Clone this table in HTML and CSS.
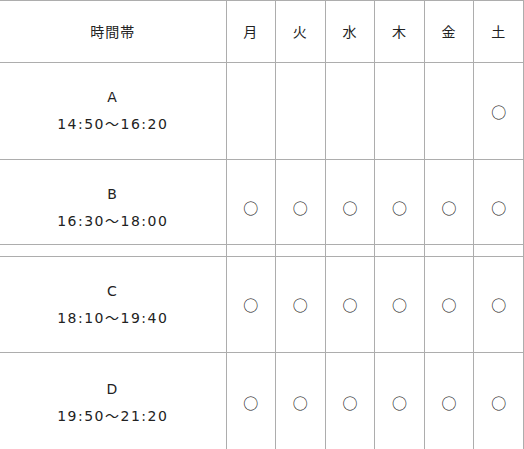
FILE: index.html
```html
<!DOCTYPE html>
<html lang="ja">
<head>
<meta charset="utf-8">
<link rel="stylesheet" href="styles.css">
</head>
<body>
<table class="schedule">
  <colgroup>
    <col class="col-time">
    <col class="col-day"><col class="col-day"><col class="col-day">
    <col class="col-day"><col class="col-day"><col class="col-day">
  </colgroup>
  <thead>
    <tr class="row-head">
      <th>時間帯</th><th>月</th><th>火</th><th>水</th><th>木</th><th>金</th><th>土</th>
    </tr>
  </thead>
  <tbody>
    <tr class="row-a">
      <td class="slot">A<br>14:50～16:20</td><td></td><td></td><td></td><td></td><td></td><td class="mark">○</td>
    </tr>
    <tr class="row-b">
      <td class="slot">B<br>16:30～18:00</td><td class="mark">○</td><td class="mark">○</td><td class="mark">○</td><td class="mark">○</td><td class="mark">○</td><td class="mark">○</td>
    </tr>
    <tr class="row-gap">
      <td></td><td></td><td></td><td></td><td></td><td></td><td></td>
    </tr>
    <tr class="row-c">
      <td class="slot">C<br>18:10～19:40</td><td class="mark">○</td><td class="mark">○</td><td class="mark">○</td><td class="mark">○</td><td class="mark">○</td><td class="mark">○</td>
    </tr>
    <tr class="row-d">
      <td class="slot">D<br>19:50～21:20</td><td class="mark">○</td><td class="mark">○</td><td class="mark">○</td><td class="mark">○</td><td class="mark">○</td><td class="mark">○</td>
    </tr>
  </tbody>
</table>
</body>
</html>
```
FILE: styles.css
```css
html, body {
  margin: 0;
  padding: 0;
  background: #ffffff;
}
body {
  font-family: "Noto Sans CJK JP", "DejaVu Sans", sans-serif;
  color: #222222;
  font-size: 14px;
  overflow: hidden;
}
.schedule {
  border-collapse: collapse;
  table-layout: fixed;
  width: 524px;
}
.col-time { width: 226px; }
.schedule th,
.schedule td {
  border: 1px solid #adadad;
  text-align: center;
  vertical-align: middle;
  padding: 0;
  font-weight: normal;
  letter-spacing: 1px;
  line-height: 27px;
}
.schedule .slot {
  font-family: "DejaVu Sans", "Noto Sans CJK JP", sans-serif;
  letter-spacing: 1.5px;
}
.schedule tr > :first-child {
  border-left: none;
}
.row-head { height: 62px; }
.row-a { height: 97px; }
.row-b { height: 85px; }
.row-b td { padding-top: 11px; }
.row-gap { height: 12px; }
.row-gap td { border-top-color: #989898; }
.row-c { height: 96px; }
.row-d { height: 100px; }
.schedule .mark {
  font-size: 15px;
  color: #111111;
  letter-spacing: 0;
}
```
